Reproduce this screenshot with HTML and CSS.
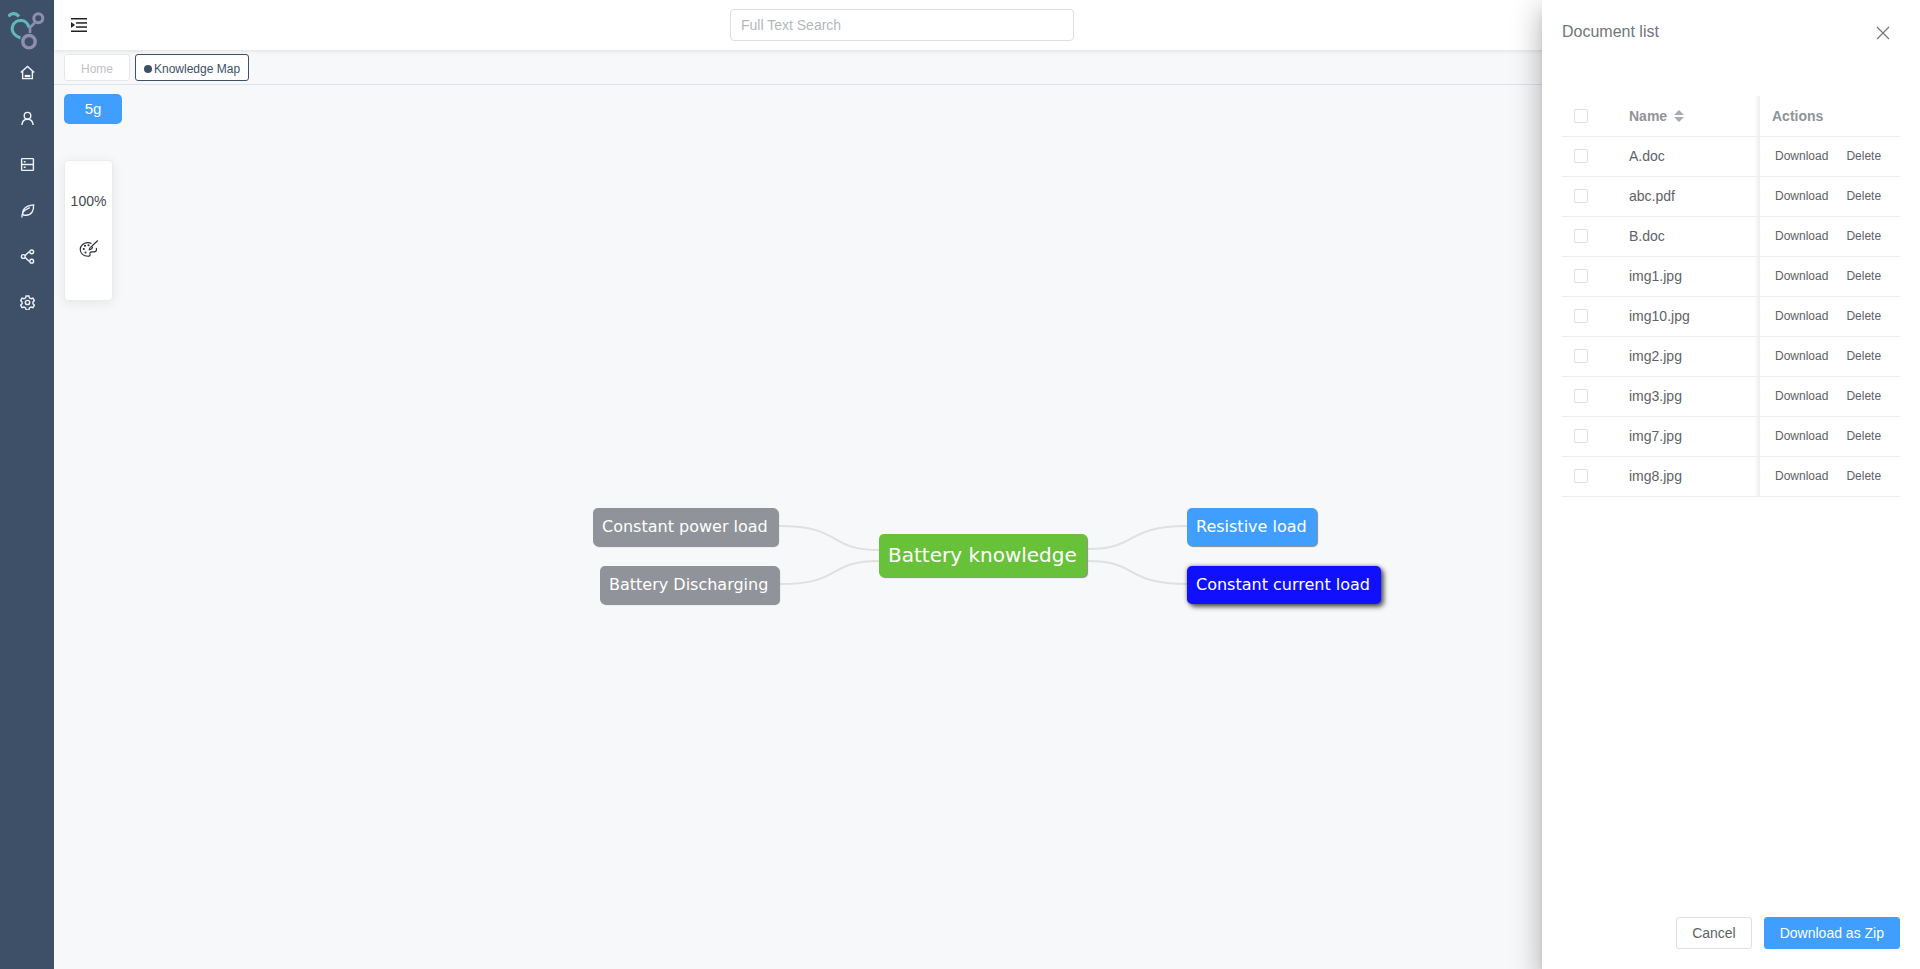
FILE: index.html
```html
<!DOCTYPE html>
<html>

<head>
  <title>Knowledge Map</title>
  <link rel="stylesheet" href="styles.css">
</head>

<body>
  <aside class="sidebar">
    <div class="logo">
      <svg width="40" height="40" viewBox="8 12 40 40" fill="none">
        <path d="M8.500 16.500C10.500 13 15.500 12.500 19 16.500" stroke="#63b7bb" stroke-width="3.200"/>
        <path d="M20.500 38C14.500 36 11 31.500 12.500 26.500C14 22 18 20 22 20.500C25.500 21 28 24 29 27.500" stroke="#63b7bb" stroke-width="3"/>
        <circle cx="38.300" cy="18.300" r="4.500" stroke="#8e8fb0" stroke-width="3"/>
        <circle cx="29" cy="41.700" r="6.200" stroke="#8e8fb0" stroke-width="3.400"/>
        <path d="M35 22.500L30 27.500V33" stroke="#8e8fb0" stroke-width="2.600"/>
      </svg>
    </div>
    <nav class="nav">
      <a class="nav-item">
        <svg class="nav-icon" viewBox="0 0 16 16"><path d="M.8 8 8 1.500l7.200 6.500M2.800 6.500v8h10.400v-8"/><path class="nav-bar" d="M5 11.800h6"/></svg>
      </a>
      <a class="nav-item">
        <svg class="nav-icon" viewBox="0 0 16 16"><circle cx="8" cy="5" r="3.500"/><path d="M2 15c.3-3.900 2.600-6.200 6-6.200s5.700 2.300 6 6.200"/></svg>
      </a>
      <a class="nav-item">
        <svg class="nav-icon" viewBox="0 0 16 16"><rect x="1.700" y="1.700" width="12.600" height="12.600" rx=".6"/><path d="M1.700 8h12.600M4 5h2M4 11h2"/></svg>
      </a>
      <a class="nav-item">
        <svg class="nav-icon" viewBox="0 0 16 16"><path d="M2 15.500c0-3 .5-4.500 1.500-6C5.500 6.500 8.500 6 10.500 5M3.200 13C2 8 4.500 3 14.500 2c.3 6-2 11-8 11H3.500"/></svg>
      </a>
      <a class="nav-item">
        <svg class="nav-icon" viewBox="0 0 16 16"><circle cx="3.500" cy="8" r="2"/><circle cx="12.500" cy="3" r="2"/><circle cx="12.500" cy="13" r="2"/><path d="M5.200 7c1.500-.5 3-3.700 5.300-4M5.200 9c1.500.5 3 3.700 5.300 4"/></svg>
      </a>
      <a class="nav-item">
        <svg class="nav-icon" viewBox="0 0 16 16"><circle cx="8" cy="8" r="2.300"/><path d="M6.500 1h3l.5 2 1.800 1 2-.6 1.500 2.600-1.500 1.400v2l1.500 1.400-1.500 2.600-2-.6-1.800 1-.5 2.200h-3l-.5-2.200-1.800-1-2 .6L.7 10.800l1.500-1.400v-2L.7 6l1.500-2.600 2 .6L6 3z"/></svg>
      </a>
    </nav>
  </aside>

  <div class="main">
    <header class="topbar">
      <div class="menu-toggle">
        <svg width="16" height="14" viewBox="0 0 16 14" fill="#222">
          <rect width="16" height="1.500"/>
          <rect x="5" y="4.200" width="11" height="1.500"/>
          <rect x="5" y="8.300" width="11" height="1.500"/>
          <rect y="12.500" width="16" height="1.500"/>
          <path d="M0 4v6l4-3z"/>
        </svg>
      </div>
      <input class="search" type="text" placeholder="Full Text Search">
    </header>

    <div class="tabs">
      <span class="tab">Home</span>
      <span class="tab tab-active"><i class="tab-dot"></i>Knowledge Map</span>
    </div>

    <div class="canvas">
      <button class="tag-btn">5g</button>
      <div class="zoom-panel">
        <div class="zoom-value">100%</div>
        <svg class="palette" width="20" height="20" viewBox="0 0 20 20" fill="none" stroke="#2b2f36" stroke-width="1.100">
          <path d="M12.500 4.400C11.200 3.800 9.900 3.500 8.500 3.600 4.500 3.900 1.200 6.800 1.200 10.500c0 3.800 3.400 6.800 7.800 6.800 1.500 0 2.300-.8 2-1.900-.4-1.400.3-2.500 1.700-2.500h2.400c1.400 0 2.400-1 2.400-2.300 0-.6-.1-1.200-.3-1.800"/>
          <path d="M18.800 1.500 12.500 7.500"/>
          <path d="M12.500 7.500c-1.500.3-2 1.500-2.300 3.200 1.800-.2 3-.8 3.300-2.300z"/>
          <circle cx="4.800" cy="10" r=".5" fill="#2b2f36"/>
          <circle cx="6" cy="6.800" r=".5" fill="#2b2f36"/>
          <circle cx="9.500" cy="6.200" r=".5" fill="#2b2f36"/>
          <circle cx="6.500" cy="13.500" r=".5" fill="#2b2f36"/>
        </svg>
      </div>

      <svg class="links" width="1400" height="600" fill="none" stroke="#e0e0e0" stroke-width="2">
        <path d="M725 441C790 441 772 465 825 465"/>
        <path d="M726 499C790 499 772 476 825 476"/>
        <path d="M1034 464C1085 464 1070 441 1133 441"/>
        <path d="M1034 476C1085 476 1070 499 1133 499"/>
      </svg>
      <div class="node node-grey node-power">Constant power load</div>
      <div class="node node-grey node-discharge">Battery Discharging</div>
      <div class="node node-root">Battery knowledge</div>
      <div class="node node-blue node-resistive">Resistive load</div>
      <div class="node node-selected node-current">Constant current load</div>
    </div>
  </div>

  <div class="drawer">
    <div class="drawer-header">
      <span class="drawer-title">Document list</span>
      <svg class="drawer-close" width="14" height="14" viewBox="0 0 14 14" stroke="#72767b" stroke-width="1.200"><path d="M1 1l12 12M13 1L1 13"/></svg>
    </div>
    <div class="drawer-body">
      <table class="doc-table">
        <thead>
          <tr>
            <th class="col-check"><span class="checkbox"></span></th>
            <th class="col-name">Name <i class="sort"><b class="sort-up"></b><b class="sort-down"></b></i></th>
            <th class="col-actions">Actions</th>
          </tr>
        </thead>
        <tbody>
          <tr><td class="col-check"><span class="checkbox"></span></td><td class="col-name">A.doc</td><td class="col-actions"><a>Download</a><a>Delete</a></td></tr>
          <tr><td class="col-check"><span class="checkbox"></span></td><td class="col-name">abc.pdf</td><td class="col-actions"><a>Download</a><a>Delete</a></td></tr>
          <tr><td class="col-check"><span class="checkbox"></span></td><td class="col-name">B.doc</td><td class="col-actions"><a>Download</a><a>Delete</a></td></tr>
          <tr><td class="col-check"><span class="checkbox"></span></td><td class="col-name">img1.jpg</td><td class="col-actions"><a>Download</a><a>Delete</a></td></tr>
          <tr><td class="col-check"><span class="checkbox"></span></td><td class="col-name">img10.jpg</td><td class="col-actions"><a>Download</a><a>Delete</a></td></tr>
          <tr><td class="col-check"><span class="checkbox"></span></td><td class="col-name">img2.jpg</td><td class="col-actions"><a>Download</a><a>Delete</a></td></tr>
          <tr><td class="col-check"><span class="checkbox"></span></td><td class="col-name">img3.jpg</td><td class="col-actions"><a>Download</a><a>Delete</a></td></tr>
          <tr><td class="col-check"><span class="checkbox"></span></td><td class="col-name">img7.jpg</td><td class="col-actions"><a>Download</a><a>Delete</a></td></tr>
          <tr><td class="col-check"><span class="checkbox"></span></td><td class="col-name">img8.jpg</td><td class="col-actions"><a>Download</a><a>Delete</a></td></tr>
        </tbody>
      </table>
    </div>
    <div class="drawer-footer">
      <button class="btn">Cancel</button>
      <button class="btn btn-primary">Download as Zip</button>
    </div>
  </div>
</body>

</html>
```

FILE: styles.css
```css
* {
  box-sizing: border-box;
  margin: 0;
  padding: 0;
}

html,
body {
  height: 100%;
  overflow: hidden;
}

body {
  display: flex;
  font-family: 'Liberation Sans', Arial, sans-serif;
  background-color: #f7f8fa;
  color: #303133;
}

/* sidebar */
.sidebar {
  width: 54px;
  flex-shrink: 0;
  background-color: #3d5068;
}

.logo {
  height: 50px;
  padding: 12px 0 0 8px;
}

.nav {
  display: flex;
  flex-direction: column;
}

.nav-item {
  display: flex;
  align-items: center;
  justify-content: center;
  width: 54px;
  height: 46px;
  margin-top: -1px;
  margin-bottom: 1px;
}

.nav-icon {
  width: 15px;
  height: 15px;
  fill: none;
  stroke: #edf3fa;
  stroke-width: 1.500;
}

.nav-bar {
  stroke-width: 2.500;
}

/* top area */
.main {
  flex: 1;
  display: flex;
  flex-direction: column;
  min-width: 0;
}

.topbar {
  position: relative;
  height: 50px;
  flex-shrink: 0;
  background-color: #ffffff;
  box-shadow: 0 1px 4px rgba(0, 0, 0, 0.1);
  display: flex;
  align-items: center;
  padding-left: 17px;
}

.menu-toggle {
  display: flex;
  width: 16px;
  margin-right: 643px;
}

.search {
  width: 344px;
  height: 32px;
  border: 1px solid #dcdfe6;
  border-radius: 4px;
  padding: 0 10px;
  font-family: inherit;
  font-size: 14px;
  color: #606266;
  outline: none;
}

.search::placeholder {
  color: #b4b7bd;
}

.tabs {
  height: 35px;
  flex-shrink: 0;
  display: flex;
  align-items: flex-start;
  gap: 5px;
  padding: 4px 0 0 10px;
  border-bottom: 1px solid #dfe2e8;
}

.tab {
  display: flex;
  align-items: center;
  height: 27px;
  padding: 2px 16px 0;
  background-color: #ffffff;
  border: 1px solid #e4e7ed;
  border-radius: 3px;
  font-size: 12px;
  color: #c0c2c7;
}

.tab-active {
  padding: 2px 8px 0;
  border-color: #3d5068;
  color: #3d5068;
}

.tab-dot {
  width: 8px;
  height: 8px;
  margin-right: 2px;
  border-radius: 50%;
  background-color: #3d5068;
}

/* mind map */
.canvas {
  position: relative;
  flex: 1;
}

.tag-btn {
  display: block;
  width: 58px;
  height: 30px;
  margin: 9px 0 0 10px;
  padding-bottom: 2px;
  background-color: #409eff;
  border: none;
  border-radius: 5px;
  color: #ffffff;
  font-family: inherit;
  font-size: 15px;
}

.zoom-panel {
  width: 49px;
  height: 141px;
  margin: 36px 0 0 10px;
  padding-top: 32px;
  background-color: #ffffff;
  border: 1px solid #e9ebef;
  border-radius: 4px;
  box-shadow: 0 2px 12px rgba(0, 0, 0, 0.08);
  text-align: center;
}

.zoom-value {
  font-size: 14px;
  color: #47494e;
  line-height: 16px;
}

.palette {
  margin-top: 30px;
}

.links {
  position: absolute;
  left: 0;
  top: 0;
}

.node {
  position: absolute;
  display: flex;
  align-items: center;
  height: 39px;
  padding: 0 9px 1px;
  border-radius: 5px;
  font-family: 'DejaVu Sans', sans-serif;
  font-size: 16px;
  color: #ffffff;
  white-space: nowrap;
  box-shadow: 1px 1px 1px rgba(0, 0, 0, 0.45);
}

.node-grey {
  background-color: #909399;
}

.node-blue {
  background-color: #409eff;
}

.node-root {
  left: 825px;
  top: 449px;
  width: 208px;
  height: 43px;
  background-color: #67c23a;
  font-size: 20px;
}

.node-selected {
  background-color: #1010ff;
  box-shadow: 3px 3px 5px rgba(0, 0, 0, 0.6), 0 0 4px rgba(0, 0, 0, 0.4);
}

.node-power {
  left: 539px;
  top: 423px;
  width: 185px;
  height: 38px;
}

.node-discharge {
  left: 546px;
  top: 481px;
  width: 179px;
  height: 38px;
}

.node-resistive {
  left: 1133px;
  top: 423px;
  width: 130px;
  height: 38px;
}

.node-current {
  left: 1133px;
  top: 481px;
  width: 194px;
  height: 38px;
}

/* document drawer */
.drawer {
  position: absolute;
  top: 0;
  right: 0;
  width: 378px;
  height: 100%;
  display: flex;
  flex-direction: column;
  background-color: #ffffff;
  box-shadow: 0 8px 10px -5px rgba(0, 0, 0, 0.2), 0 16px 24px 2px rgba(0, 0, 0, 0.14), 0 6px 30px 5px rgba(0, 0, 0, 0.12);
}

.drawer-header {
  display: flex;
  align-items: flex-start;
  justify-content: space-between;
  padding: 23px 30px 0 20px;
  height: 96px;
}

.drawer-title {
  font-size: 16px;
  line-height: 18px;
  color: #72767b;
}

.drawer-close {
  margin-top: 3px;
}

.drawer-body {
  flex: 1;
  padding: 0 20px;
}

.doc-table {
  width: 338px;
  border-collapse: collapse;
  table-layout: fixed;
  font-size: 14px;
  color: #606266;
}

.doc-table th,
.doc-table td {
  height: 40px;
  border-bottom: 1px solid #ebeef5;
  text-align: left;
}

.doc-table th {
  color: #909399;
  font-weight: bold;
}

.col-check {
  width: 67px;
  padding-left: 12px;
}

.col-name {
  width: 131px;
}

.col-actions {
  position: relative;
  width: 140px;
  padding-left: 12px;
  font-size: 12px;
}

/* shadow of the fixed column */
.col-actions::before {
  content: '';
  position: absolute;
  left: -6px;
  top: 0;
  width: 6px;
  height: 100%;
  background: linear-gradient(to left, rgba(0, 0, 0, 0.07), rgba(0, 0, 0, 0));
}

th.col-actions {
  font-size: 14px;
}

.col-actions a {
  margin: 0 15px 0 3px;
  color: #606266;
}

.checkbox {
  display: block;
  width: 14px;
  height: 14px;
  background-color: #ffffff;
  border: 1px solid #dcdfe6;
  border-radius: 2px;
}

.sort {
  display: inline-block;
  position: relative;
  width: 10px;
  height: 12px;
  margin-left: 3px;
  vertical-align: -1px;
}

.sort b {
  position: absolute;
  left: 0;
  border-left: 5px solid transparent;
  border-right: 5px solid transparent;
}

.sort-up {
  top: 0;
  border-bottom: 5px solid #a8abb2;
}

.sort-down {
  bottom: 0;
  border-top: 5px solid #a8abb2;
}

.drawer-footer {
  display: flex;
  justify-content: flex-end;
  gap: 12px;
  padding: 0 20px 20px;
}

.btn {
  height: 32px;
  padding: 0 15px;
  background-color: #ffffff;
  border: 1px solid #dcdfe6;
  border-radius: 3px;
  font-family: inherit;
  font-size: 14px;
  color: #606266;
}

.btn-primary {
  background-color: #409eff;
  border-color: #409eff;
  color: #ffffff;
}
```
